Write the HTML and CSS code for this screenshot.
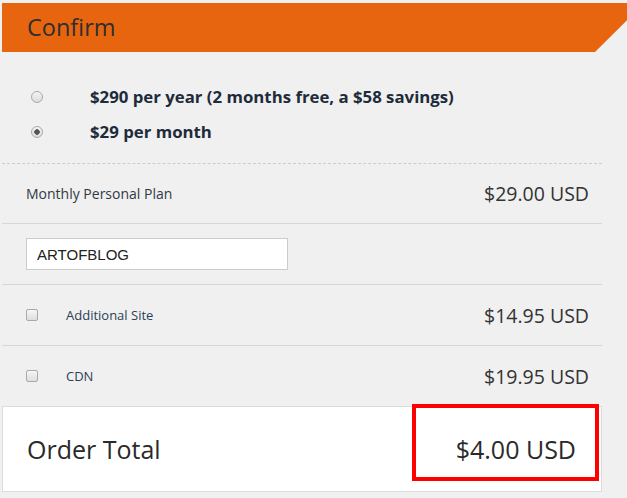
FILE: index.html
```html
<!DOCTYPE html>
<html lang="en">
<head>
  <meta charset="UTF-8">
  <title>Confirm</title>
  <link rel="stylesheet" href="styles.css">
</head>
<body>
  <div class="header">
    <h2>Confirm</h2>
  </div>

  <div class="panel">
    <div class="plans">
      <label class="plan">
        <input type="radio" name="plan">
        <span>$290 per year (2 months free, a $58 savings)</span>
      </label>
      <label class="plan">
        <input type="radio" name="plan" checked>
        <span>$29 per month</span>
      </label>
    </div>

    <div class="row first">
      <span class="item">Monthly Personal Plan</span>
      <span class="price">$29.00 USD</span>
    </div>

    <div class="row coupon-row">
      <input type="text" class="coupon" value="ARTOFBLOG">
    </div>

    <div class="row">
      <label class="extra">
        <input type="checkbox">
        <span>Additional Site</span>
      </label>
      <span class="price">$14.95 USD</span>
    </div>

    <div class="row last">
      <label class="extra">
        <input type="checkbox">
        <span>CDN</span>
      </label>
      <span class="price">$19.95 USD</span>
    </div>

    <div class="total">
      <span>Order Total</span>
      <span class="total-price">$4.00 USD</span>
      <div class="highlight"></div>
    </div>
  </div>
</body>
</html>
```

FILE: styles.css
```css
body {
  font-family: 'Open Sans', sans-serif;
  background-color: #f0f0f0;
  margin: 0;
  padding-top: 3px;
  color: #333;
}
.header {
  margin-left: 2px;
  height: 49px;
  background-color: #e8650f;
  display: flex;
  align-items: center;
  clip-path: polygon(0 0, 100% 0, 100% 35%, calc(100% - 32px) 100%, 0 100%);
}
.header h2 {
  margin: 0 0 1px 25px;
  font-size: 23.5px;
  font-weight: 400;
  color: #2e2e2e;
}
.panel {
  margin-left: 2px;
  width: 600px;
}
.plans {
  padding: 27px 0 14px;
  border-bottom: 1px dashed #ccc;
}
.plan {
  display: flex;
  align-items: center;
  height: 35px;
  font-size: 16.8px;
  font-weight: 700;
  color: #1e2b3a;
}
.plan input {
  appearance: none;
  flex: none;
  width: 12px;
  height: 12px;
  margin: 0 47px 0 29px;
  border: 1px solid #a9a9a9;
  border-radius: 50%;
  background: linear-gradient(#f4f4f4, #dcdcdc);
}
.plan input:checked {
  background: radial-gradient(circle, #555 0, #555 2.5px, transparent 3px), linear-gradient(#f4f4f4, #dcdcdc);
}
.row {
  display: flex;
  align-items: center;
  justify-content: space-between;
  height: 60px;
  padding: 0 13px 0 24px;
  border-bottom: 1px solid #d6d6d6;
}
.row.first {
  height: 59px;
}
.row.last {
  border-bottom: none;
}
.item {
  font-size: 14px;
  color: #2f3a45;
}
.price {
  font-size: 19.5px;
  color: #333;
}
.coupon {
  width: 262px;
  height: 32px;
  box-sizing: border-box;
  border: 1px solid #ccc;
  padding: 0 10px;
  font-family: 'Liberation Sans', Arial, sans-serif;
  font-size: 15px;
  color: #222;
  background: #fff;
  outline: none;
}
.extra {
  display: flex;
  align-items: center;
  font-size: 13px;
  color: #2b3f55;
}
.extra input {
  appearance: none;
  width: 12px;
  height: 12px;
  margin: 0 28px 0 0;
  border: 1px solid #a9a9a9;
  border-radius: 2px;
  background: linear-gradient(#f6f6f6, #dedede);
}
.total {
  position: relative;
  display: flex;
  align-items: center;
  justify-content: space-between;
  height: 84px;
  padding: 0 25px 0 24px;
  background: #fff;
  border: 1px solid #dcdcdc;
  font-size: 25px;
  color: #2a2a2a;
}
.highlight {
  position: absolute;
  top: -3px;
  left: 409px;
  width: 179px;
  height: 69px;
  border: 4px solid #f00;
}
```
